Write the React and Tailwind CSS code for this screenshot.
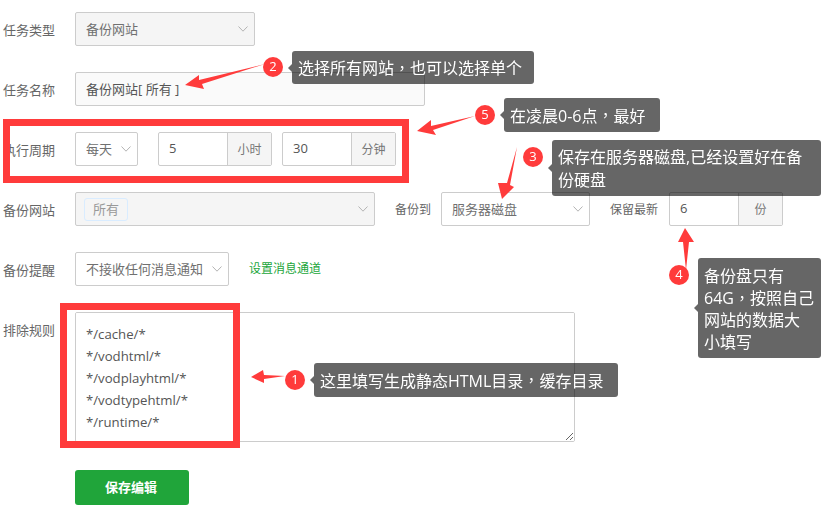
import React from "react";

const Chevron = () => (
  <svg width="10" height="6" viewBox="0 0 10 6" className="shrink-0" fill="none">
    <path d="M0.5 0.5 L5 5.2 L9.5 0.5" stroke="#b3b3b3" strokeWidth="1" />
  </svg>
);

const Label = ({ children, className = "" }) => (
  <div className={`h-[34px] pt-[1px] leading-[34px] text-[#666] ${className}`}>{children}</div>
);

const Select = ({ width, bg = "bg-white", children }) => (
  <div className={`flex h-[34px] shrink-0 items-center justify-between rounded-[2px] border border-[#ccc] pl-[10px] pr-[6px] text-[13px] text-[#707070] ${width} ${bg}`}>
    <span className="truncate pt-[1px]">{children}</span>
    <Chevron />
  </div>
);

const InputGroup = ({ value, unit }) => (
  <div className="flex h-[34px] w-[114px] shrink-0 rounded-[2px] border border-[#ccc]">
    <div className="flex w-[69px] items-center border-r border-[#ccc] pl-[10px] text-[13px] text-[#555]">{value}</div>
    <div className="flex flex-1 items-center justify-center bg-[#f5f5f5] pt-[1px] text-[12px] text-[#777]">{unit}</div>
  </div>
);

const Comma = () => (
  <span className="px-[0.5px] text-[15px]" style={{ fontFamily: '"Noto Sans CJK TC", sans-serif' }}>，</span>
);

const Tip = ({ className, children }) => (
  <div className={`absolute rounded-[3px] bg-black/60 text-[16px] text-white ${className}`}>
    <span className="absolute left-[-4px] top-1/2 -mt-[4px] h-0 w-0 border-y-[4px] border-r-[4px] border-y-transparent border-r-black/60" />
    {children}
  </div>
);

const Badge = ({ className, children }) => (
  <div className={`absolute flex h-[20px] w-[20px] items-center justify-center rounded-full bg-[#ff3b3b] text-[13px] font-medium text-white ${className}`}>
    {children}
  </div>
);

export default function App() {
  return (
    <div
      className="relative h-[522px] w-[822px] overflow-hidden bg-white pl-[3px] pt-[12px]"
      style={{ fontFamily: '"Open Sans", "Noto Sans CJK SC", sans-serif' }}
    >
      <div className="flex flex-col gap-[26px]">
        <div className="flex">
          <Label className="w-[72px] text-[13px]">任务类型</Label>
          <Select width="w-[180px]" bg="bg-[#f5f5f5]">备份网站</Select>
        </div>

        <div className="flex">
          <Label className="w-[72px] text-[13px]">任务名称</Label>
          <div className="flex h-[34px] w-[350px] items-center rounded-[2px] border border-[#ccc] bg-[#fafafa] pl-[10px] pt-[1px] text-[13px] text-[#555]">
            备份网站[ 所有 ]
          </div>
        </div>

        <div className="flex">
          <Label className="w-[72px] text-[13px]">执行周期</Label>
          <Select width="w-[63px]">每天</Select>
          <div className="ml-[20px] flex gap-[10px]">
            <InputGroup value="5" unit="小时" />
            <InputGroup value="30" unit="分钟" />
          </div>
        </div>

        <div className="flex">
          <Label className="w-[72px] text-[13px]">备份网站</Label>
          <div className="flex h-[34px] w-[300px] shrink-0 items-center justify-between rounded-[2px] border border-[#ccc] bg-[#f5f5f5] pl-[8px] pr-[6px]">
            <span className="rounded-[3px] border border-[#d9ecff] px-[8px] text-[13px] leading-[21px] text-[#999]">所有</span>
            <Chevron />
          </div>
          <Label className="ml-[20px] w-[46px] text-[12px]">备份到</Label>
          <Select width="w-[149px]">服务器磁盘</Select>
          <Label className="ml-[20px] w-[59px] text-[12px]">保留最新</Label>
          <InputGroup value="6" unit="份" />
        </div>

        <div className="flex items-center">
          <Label className="w-[72px] text-[13px]">备份提醒</Label>
          <Select width="w-[154px]">不接收任何消息通知</Select>
          <span className="ml-[20px] text-[12px] text-[#20a53a]">设置消息通道</span>
        </div>

        <div className="flex">
          <Label className="w-[72px] text-[13px]">排除规则</Label>
          <textarea
            readOnly
            className="h-[130px] w-[500px] rounded-[2px] border border-[#ccc] bg-white px-[10px] py-[10px] text-[13.2px] leading-[22px] text-[#555] outline-none"
            defaultValue={"*/cache/*\n*/vodhtml/*\n*/vodplayhtml/*\n*/vodtypehtml/*\n*/runtime/*"}
          />
        </div>
      </div>

      <button className="ml-[72px] mt-[28px] block h-[35px] w-[114px] rounded-[3px] bg-[#20a53a] pr-[2px] text-[13px] font-semibold text-white">
        保存编辑
      </button>

      {/* annotations drawn over the form */}
      <div className="pointer-events-none absolute left-[3px] top-[119px] h-[64px] w-[406px] border-[7px] border-[#ff3b3b]" />
      <div className="pointer-events-none absolute left-[60px] top-[303px] h-[145px] w-[180px] border-[7px] border-[#ff3b3b]" />

      <svg className="pointer-events-none absolute left-0 top-0" width="822" height="522" fill="#ff3b3b">
        <polygon points="265,64 199,80 199,75 185,85 204,89 202,84" />
        <polygon points="475,116 431,126 431,120 417,131 436,135 433,130" />
        <polygon points="517,147 507,183 498,183 502,199 514,187 510,185" />
        <polygon points="686,270 683,242 678,242 685,228 694,242 689,242" />
        <polygon points="285,376 264,375 263,370 251,377 264,383 264,379" />
      </svg>

      <Badge className="left-[263px] top-[57px]">2</Badge>
      <Badge className="left-[475px] top-[105px]">5</Badge>
      <Badge className="left-[523px] top-[147px]">3</Badge>
      <Badge className="left-[669px] top-[265px]">4</Badge>
      <Badge className="left-[285px] top-[370px]">1</Badge>

      <Tip className="left-[292px] top-[51px] flex h-[33px] w-[242px] items-center pl-[6px] pt-[1px]">选择所有网站<Comma />也可以选择单个</Tip>
      <Tip className="left-[504px] top-[98px] flex h-[34px] w-[156px] items-center pl-[6px] pt-[1px]">在凌晨0-6点<Comma />最好</Tip>
      <Tip className="left-[552px] top-[140px] h-[56px] w-[269px] px-[6px] pt-[6px] leading-[23px]">
        <div>保存在服务器磁盘,已经设置好在备</div>
        <div>份硬盘</div>
      </Tip>
      <Tip className="left-[698px] top-[258px] h-[100px] w-[123px] px-[6px] pt-[7px] leading-[22px]">
        <div>备份盘只有</div>
        <div>64G<Comma />按照自己</div>
        <div>网站的数据大</div>
        <div>小填写</div>
      </Tip>
      <Tip className="left-[314px] top-[363px] flex h-[34px] w-[304px] items-center pl-[6px] pt-[1px]">这里填写生成静态HTML目录<Comma />缓存目录</Tip>
    </div>
  );
}
